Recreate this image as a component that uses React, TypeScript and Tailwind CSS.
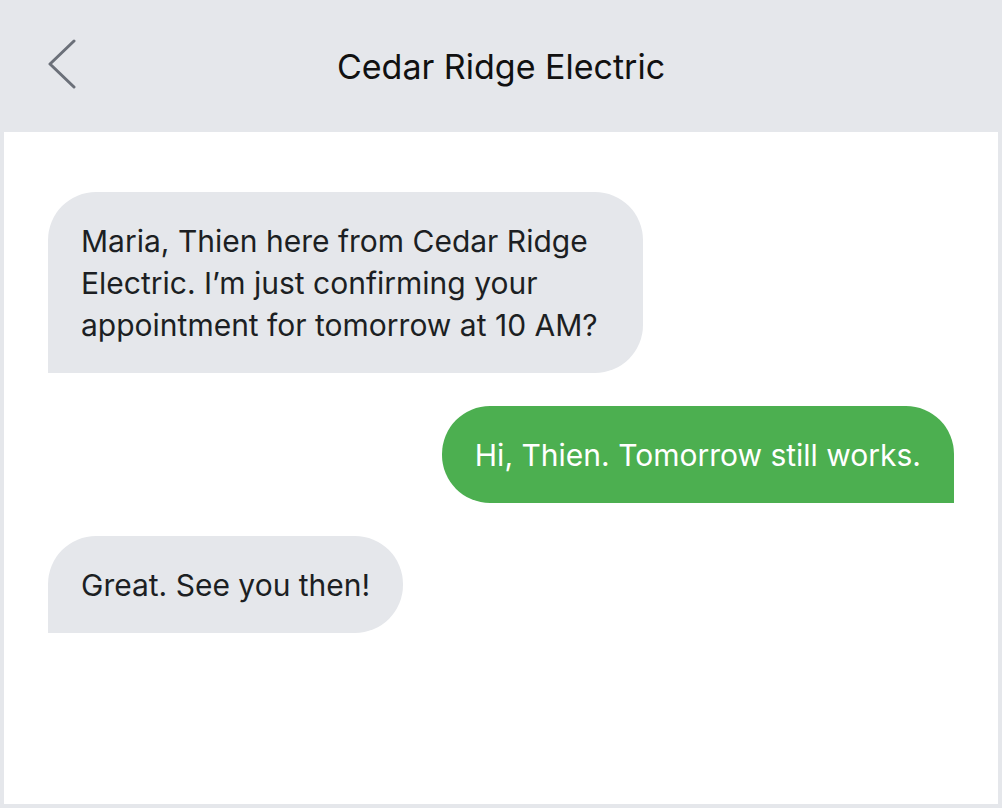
import React from 'react';

type Message = {
  id: number;
  from: 'them' | 'me';
  text: string;
};

const messages: Message[] = [
  {
    id: 1,
    from: 'them',
    text: 'Maria, Thien here from Cedar Ridge Electric. I’m just confirming your appointment for tomorrow at 10 AM?'
  },
  { id: 2, from: 'me', text: 'Hi, Thien. Tomorrow still works.' },
  { id: 3, from: 'them', text: 'Great. See you then!' }
];

const BackChevron: React.FC = () => (
  <svg width="30" height="52" viewBox="0 0 30 52" fill="none" className="block">
    <path
      d="M26 3 L2 26 L26 49"
      stroke="#6b7079"
      strokeWidth="3"
      strokeLinecap="round"
      strokeLinejoin="round"
    />
  </svg>
);

const Bubble: React.FC<{ message: Message }> = ({ message }) => {
  const mine = message.from === 'me';
  return (
    <div className={mine ? 'flex justify-end' : 'flex justify-start'}>
      <div
        className={
          mine
            ? 'max-w-[595px] rounded-[48px] rounded-br-none bg-[#4caf50] px-[33px] py-[27.5px] text-white'
            : 'max-w-[595px] rounded-[48px] rounded-bl-none bg-[#e5e7eb] px-[33px] py-[27.5px] text-[#1c1f23]'
        }
      >
        <p className="text-[30px] leading-[42px]">{message.text}</p>
      </div>
    </div>
  );
};

export default function App() {
  return (
    <div
      className="flex h-[808px] w-[1002px] flex-col bg-[#e5e7eb]"
      style={{ fontFamily: 'Inter, "Noto Sans", sans-serif' }}
    >
      <header className="relative flex h-[132px] shrink-0 items-center justify-center">
        <button className="absolute left-[48px] top-[38px]" aria-label="Back">
          <BackChevron />
        </button>
        <h1 className="text-[34px] font-normal text-[#111111]">Cedar Ridge Electric</h1>
      </header>
      <main className="mx-[4px] mb-[4px] flex flex-1 flex-col gap-[33px] bg-white px-[44px] pt-[60px]">
        {messages.map((m) => (
          <Bubble key={m.id} message={m} />
        ))}
      </main>
    </div>
  );
}
